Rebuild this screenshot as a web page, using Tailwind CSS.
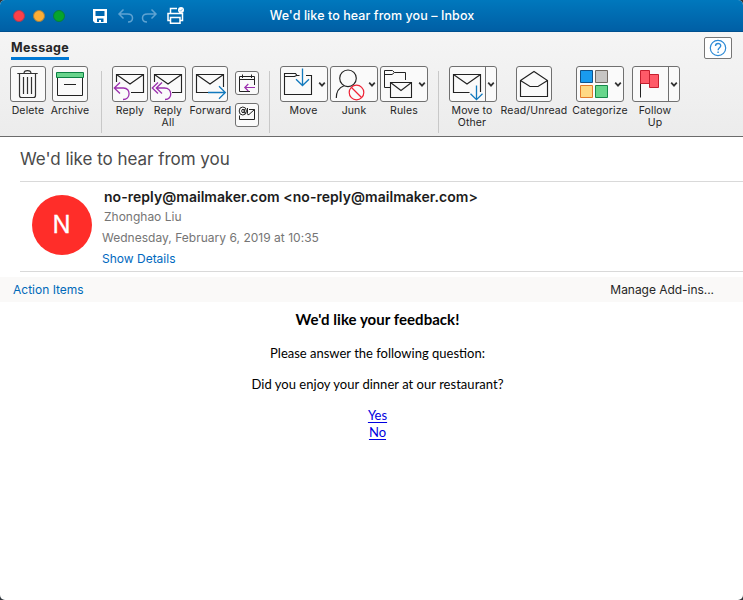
<!DOCTYPE html>
<html lang="en">
<head>
<meta charset="utf-8">
<title>We'd like to hear from you - Inbox</title>
<script src="https://cdn.jsdelivr.net/npm/@tailwindcss/browser@4"></script>
</head>
<body class="bg-[#30363c]">
<svg class="hidden">
  <symbol id="chev" viewBox="0 0 8 6"><path d="M1.2 1.2L4 4.2L6.8 1.2" fill="none" stroke="#333" stroke-width="1.7"/></symbol>
</svg>
<div class="flex h-[600px] w-[743px] flex-col overflow-hidden rounded-[5px] bg-white font-['Inter',sans-serif] text-[#262626]">

  <header class="relative flex h-8 shrink-0 items-center border-b border-[#00508f] bg-linear-to-b from-[#0078bd] to-[#005fa5] pl-[13px]">
    <div class="flex gap-2">
      <span class="size-3 rounded-full border border-[#a83a55] bg-[#fc4048]"></span>
      <span class="size-3 rounded-full border border-[#a18044] bg-[#fdae35]"></span>
      <span class="size-3 rounded-full border border-[#087c40] bg-[#06a52c]"></span>
    </div>
    <svg class="ml-7 h-[31px] w-[92px]" viewBox="93 0 92 31" fill="none">
      <path d="M93 9H107V23H95L93 21Z" fill="#fff"/>
      <path d="M95.500 11H104.500V16H95.500ZM97 18.500H103.500V22H101V20H99V22H97Z" fill="#0068af"/>
      <path d="M123.500 9.500L119 14L123.500 18.500M119.500 14H127.500C131 14 132.500 16 132.500 18C132.500 20.500 130.500 22 128 22" stroke="#5fa3d2" stroke-width="1.500"/>
      <path d="M151.500 9.500L156 14L151.500 18.500M155.500 14H147.500C144 14 142.500 16 142.500 18C142.500 20.500 144.500 22 147 22" stroke="#5fa3d2" stroke-width="1.500"/>
      <path d="M170.500 13V8.500H177M180 13V12M170 20.500H168V13.500H182.500V20.500H180.500M170.500 17.500H180V23.300H170.500Z" stroke="#fff" stroke-width="1.500"/>
      <circle cx="181" cy="10" r="3" fill="#fff"/><path d="M179.500 10L180.700 11.200L182.700 8.800" stroke="#5a9fd0" stroke-width=".7"/>
    </svg>
    <h1 class="absolute inset-x-0 top-[8px] pl-px text-center text-[12.5px] leading-4 font-medium tracking-[0.08px] text-white">We'd like to hear from you – Inbox</h1>
  </header>

  <section class="h-[105px] shrink-0 border-b border-[#6b6b6b] bg-linear-to-b from-[#f5f5f5] to-[#ececec]">
    <div class="flex h-[34px] justify-between pr-[11px] pl-[11px]">
      <div class="mt-[8px] h-[20px] border-b-[3px] border-[#0078d4] text-[12.5px] leading-[16px] font-bold tracking-[0.35px]">Message</div>
      <button class="mt-[5px] flex h-[22px] w-7 items-center justify-center rounded-[2px] border border-[#777] bg-white">
        <svg class="size-[18px]" viewBox="0 0 18 18" fill="none" stroke="#2e8bd6"><circle cx="9" cy="9" r="7.700" stroke-width="1.200"/><path d="M6.500 7.100C6.500 3.700 11.700 3.700 11.700 6.800C11.700 8.700 9.100 8.900 9.100 11.200M9.100 12.400V13.900" stroke-width="1.400"/></svg>
      </button>
    </div>
    <div class="flex items-start pl-[10px] text-center text-[10.5px] leading-3 tracking-[0.14px] whitespace-nowrap">
      <div class="flex w-9 flex-col items-center">
        <div class="h-9 w-9 shrink-0 rounded-[3px] border border-[#707070] bg-[#fafafa]"><svg class="-m-px size-9" viewBox="0 0 36 36" fill="none" stroke="#333" stroke-width="1.200"><path d="M7.300 7.500H27.700M14 7.500C14 3.700 21 3.700 21 7.500M9.500 7.500V29.500Q9.500 31.500 11.500 31.500H23.500Q25.500 31.500 25.500 29.500V7.500M13.500 11V28M17.500 11V28M21.500 11V28"/></svg></div>
        <span class="mt-[3px]">Delete</span>
      </div>
      <div class="ml-1.5 flex w-9 flex-col items-center">
        <div class="h-9 w-9 shrink-0 rounded-[3px] border border-[#707070] bg-[#fafafa]"><svg class="-m-px size-9" viewBox="0 0 36 36" fill="none" stroke="#222"><path d="M5.500 11V29.500H30.500V11M12 18.500H24"/><path d="M4.500 6.500H31.500V11.500H4.500Z" fill="#68d48b" stroke="#0b8043"/></svg></div>
        <span class="mt-[3px]">Archive</span>
      </div>
      <div class="mt-[5px] ml-[13px] h-[62px] w-px bg-[#c8c8c8]"></div>
      <div class="ml-[10px] flex w-9 flex-col items-center">
        <div class="h-9 w-9 shrink-0 rounded-[3px] border border-[#707070] bg-[#fafafa]"><svg class="-m-px size-9" viewBox="0 0 36 36" fill="none" stroke="#222"><path d="M4.500 16V8.500H31.500V26.500H19M4.500 8.500L18 18L31.500 8.500" stroke-width="1.150"/><path d="M8 16.500L2.300 22L8 27.500M2.300 22H11.500C19 22 19 33.500 11 33.500" stroke="#9b2fae" stroke-width="1.300"/></svg></div>
        <span class="mt-[3px]">Reply</span>
      </div>
      <div class="ml-0.5 flex w-9 flex-col items-center">
        <div class="h-9 w-9 shrink-0 rounded-[3px] border border-[#707070] bg-[#fafafa]"><svg class="-m-px size-9" viewBox="0 0 36 36" fill="none" stroke="#222"><path d="M4.500 16V8.500H31.500V26.500H22M4.500 8.500L18 18L31.500 8.500" stroke-width="1.150"/><path d="M8 16.500L2.300 22L8 27.500M12 16.500L6.300 22L12 27.500M6.300 22H14.500C22.500 22 23 33.500 15 33.500" stroke="#9b2fae" stroke-width="1.300"/></svg></div>
        <span class="mt-[3px]">Reply<br>All</span>
      </div>
      <div class="ml-1.5 flex w-9 flex-col items-center">
        <div class="h-9 w-9 shrink-0 rounded-[3px] border border-[#707070] bg-[#fafafa]"><svg class="-m-px size-9" viewBox="0 0 36 36" fill="none" stroke="#222"><path d="M16 26.500H4.500V8.500H31.500V21M4.500 8.500L18 18L31.500 8.500" stroke-width="1.150"/><path d="M16 26.500H33.300M27 20.300L33.300 26.500L27 32.700" stroke="#1179bd" stroke-width="1.300"/></svg></div>
        <span class="mt-[3px] ml-px">Forward</span>
      </div>
      <div class="mt-[5px] ml-[7px] flex w-6 flex-col gap-2">
        <div class="size-6 rounded-[3px] border border-[#707070] bg-[#fafafa]"><svg class="-m-px size-6" viewBox="0 0 24 24" fill="none" stroke="#222"><path d="M15 20.500H4.500V5.500H19.500V14M4.500 8.500H19.500M7.500 3.500V7M16.500 3.500V7"/><path d="M20 16.500H10M13.300 13L9.800 16.500L13.300 20" stroke="#9b2fae" stroke-width="1.200"/></svg></div>
        <div class="size-6 rounded-[3px] border border-[#707070] bg-[#fafafa]"><svg class="-m-px size-6" viewBox="0 0 24 24" fill="none" stroke="#222"><path d="M14 6.500H19.500V16.500H4.500V12.500M12.500 5V10.500Q12.500 12.500 14 11.500L19.500 6.500"/><ellipse cx="7.800" cy="8" rx="3.600" ry="4"/><ellipse cx="8" cy="8" rx="1.300" ry="1.700"/><path d="M9.300 6V10H11.200"/></svg></div>
      </div>
      <div class="mt-[5px] ml-[10px] h-[62px] w-px bg-[#c8c8c8]"></div>
      <div class="ml-[10px] flex w-12 flex-col items-center">
        <div class="h-9 w-12 shrink-0 rounded-[3px] border border-[#707070] bg-[#fafafa]"><svg class="-m-px h-9 w-12" viewBox="0 0 48 36" fill="none" stroke="#222"><path d="M19.500 9.500H17L15.500 7.500H4.500V28.500H31.500V9.500H26M4.500 10.500H14.500L16.500 9.500" stroke-width="1.100"/><path d="M22.500 2.500V19.500M16 13.300L22.500 19.500L29 13.300" stroke="#1179bd" stroke-width="1.300"/><use href="#chev" x="38" y="15.500" width="8" height="6"/></svg></div>
        <span class="mt-[3px] -ml-px">Move</span>
      </div>
      <div class="ml-0.5 flex w-12 flex-col items-center">
        <div class="h-9 w-12 shrink-0 rounded-[3px] border border-[#707070] bg-[#fafafa]"><svg class="-m-px h-9 w-12" viewBox="0 0 48 36" fill="none" stroke="#222"><circle cx="18" cy="12.300" r="8.300" stroke-width="1.150"/><path d="M6.300 32C6.300 25 9 21.500 14 19.700" stroke-width="1.150"/><circle cx="26.500" cy="26.500" r="7.300" fill="#fafafa" stroke="#ee2235" stroke-width="1.200"/><path d="M21.500 21.500L31.500 31.500" stroke="#ee2235" stroke-width="1.200"/><use href="#chev" x="38" y="15.500" width="8" height="6"/></svg></div>
        <span class="mt-[3px]">Junk</span>
      </div>
      <div class="ml-0.5 flex w-12 flex-col items-center">
        <div class="h-9 w-12 shrink-0 rounded-[3px] border border-[#707070] bg-[#fafafa]"><svg class="-m-px h-9 w-12" viewBox="0 0 48 36" fill="none" stroke="#222"><path d="M10 21.500H4.500V4.500H12.500L14.500 6.500H25.500V14M4.500 8.500H12L14.500 6.500"/><path d="M10.500 16.500H31.500V31.500H10.500ZM10.500 16.500L21 24.500L31.500 16.500" stroke-width="1.100"/><use href="#chev" x="38" y="15.500" width="8" height="6"/></svg></div>
        <span class="mt-[3px]">Rules</span>
      </div>
      <div class="mt-[5px] ml-[10px] h-[62px] w-px bg-[#c8c8c8]"></div>
      <div class="ml-[10px] flex w-12 flex-col items-center">
        <div class="h-9 w-12 shrink-0 rounded-[3px] border border-[#707070] bg-[#fafafa]"><svg class="-m-px h-9 w-12" viewBox="0 0 48 36" fill="none" stroke="#222"><path d="M36.500 0V36" stroke="#707070"/><path d="M20.500 26.500H4.500V8.500H31.500V26M4.500 8.500L18 18L31.500 8.500" stroke-width="1.150"/><path d="M27.500 19.500V33.500M21.500 27.700L27.500 33.700L33.500 27.700" stroke="#1179bd" stroke-width="1.300"/><use href="#chev" x="38" y="15.500" width="8" height="6"/></svg></div>
        <span class="mt-[3px] -ml-0.5">Move to<br>Other</span>
      </div>
      <div class="ml-[19px] flex w-9 flex-col items-center">
        <div class="h-9 w-9 shrink-0 rounded-[3px] border border-[#707070] bg-[#fafafa]"><svg class="-m-px size-9" viewBox="0 0 36 36" fill="none" stroke="#222" stroke-width="1.150"><path d="M4.500 14.500L18 5.500L31.500 14.500V30.500H4.500ZM4.500 14.500L14 20.500H22L31.500 14.500"/></svg></div>
        <span class="mt-[3px]">Read/Unread</span>
      </div>
      <div class="ml-6 flex w-12 flex-col items-center">
        <div class="h-9 w-12 shrink-0 rounded-[3px] border border-[#707070] bg-[#fafafa]"><svg class="-m-px h-9 w-12" viewBox="0 0 48 36"><path d="M4.500 4.500H16.500V16.500H4.500Z" fill="#199bef" stroke="#10528a"/><path d="M19.500 4.500H31.500V16.500H19.500Z" fill="#c7c5c3" stroke="#716962"/><path d="M4.500 19.500H16.500V31.500H4.500Z" fill="#ffd884" stroke="#e27a2b"/><path d="M19.500 19.500H31.500V31.500H19.500Z" fill="#67d68b" stroke="#17884a"/><use href="#chev" x="38" y="15.500" width="8" height="6"/></svg></div>
        <span class="mt-[3px]">Categorize</span>
      </div>
      <div class="ml-2 flex w-12 flex-col items-center">
        <div class="h-9 w-12 shrink-0 rounded-[3px] border border-[#707070] bg-[#fafafa]"><svg class="-m-px h-9 w-12" viewBox="0 0 48 36"><path d="M36.500 0V36" stroke="#707070"/><path d="M8.500 17V31.500" stroke="#222"/><path d="M17.500 8.500H26.500V21.500H17.500ZM8.500 4.500H17.500V17.500H8.500Z" fill="#ff5a68" stroke="#c51f2f"/><use href="#chev" x="38" y="15.500" width="8" height="6"/></svg></div>
        <span class="mt-[3px] -ml-0.5">Follow<br>Up</span>
      </div>
    </div>
  </section>

  <main class="flex flex-1 flex-col">
    <div class="ml-5 h-[45px] border-b border-[#d9d9d9] pt-[10px] text-[17px] leading-6 tracking-[-0.03px] text-[#4a4a4a]">We'd like to hear from you</div>
    <div class="ml-5 flex h-[90px] border-b border-[#d9d9d9] pt-[5px] pl-3">
      <div class="mt-[8px] flex size-[60px] items-center justify-center rounded-full bg-[#ff2d29] pr-px text-[24px] text-white"><span class="[-webkit-text-stroke:0.3px_white]">N</span></div>
      <div class="ml-[10px] text-[12px] text-[#757575]">
        <div class="ml-0.5 h-5 text-[14px] leading-5 font-semibold tracking-[0.04px] text-[#1c1c1c]">no-reply@mailmaker.com &lt;no-reply@mailmaker.com&gt;</div>
        <div class="ml-0.5 h-5 leading-5">Zhonghao Liu</div>
        <div class="h-[21px] leading-[21px] tracking-[0.02px]">Wednesday, February 6, 2019 at 10:35</div>
        <div class="h-[21px] leading-[21px] text-[#0069c0]">Show Details</div>
      </div>
    </div>
    <div class="mt-[5px] flex h-[25px] items-center justify-between bg-[#faf9f8] pr-[29px] pl-[13px] text-[12px]">
      <a class="text-[#0069b8]">Action Items</a>
      <span class="tracking-[-0.04px]">Manage Add-ins...</span>
    </div>
    <article class="flex flex-col items-center pl-3 font-['Lato',sans-serif] text-[13px] leading-[17px] text-black">
      <h2 class="mt-[7px] text-[15px] leading-5 font-bold tracking-[0.04px]">We'd like your feedback!</h2>
      <p class="mt-4">Please answer the following question:</p>
      <p class="mt-[14px] tracking-[0.03px]">Did you enjoy your dinner at our restaurant?</p>
      <a class="mt-[14px] text-[#0000e0] underline underline-offset-2">Yes</a>
      <a class="text-[#0000e0] underline underline-offset-2">No</a>
    </article>
  </main>
</div>
</body>
</html>
